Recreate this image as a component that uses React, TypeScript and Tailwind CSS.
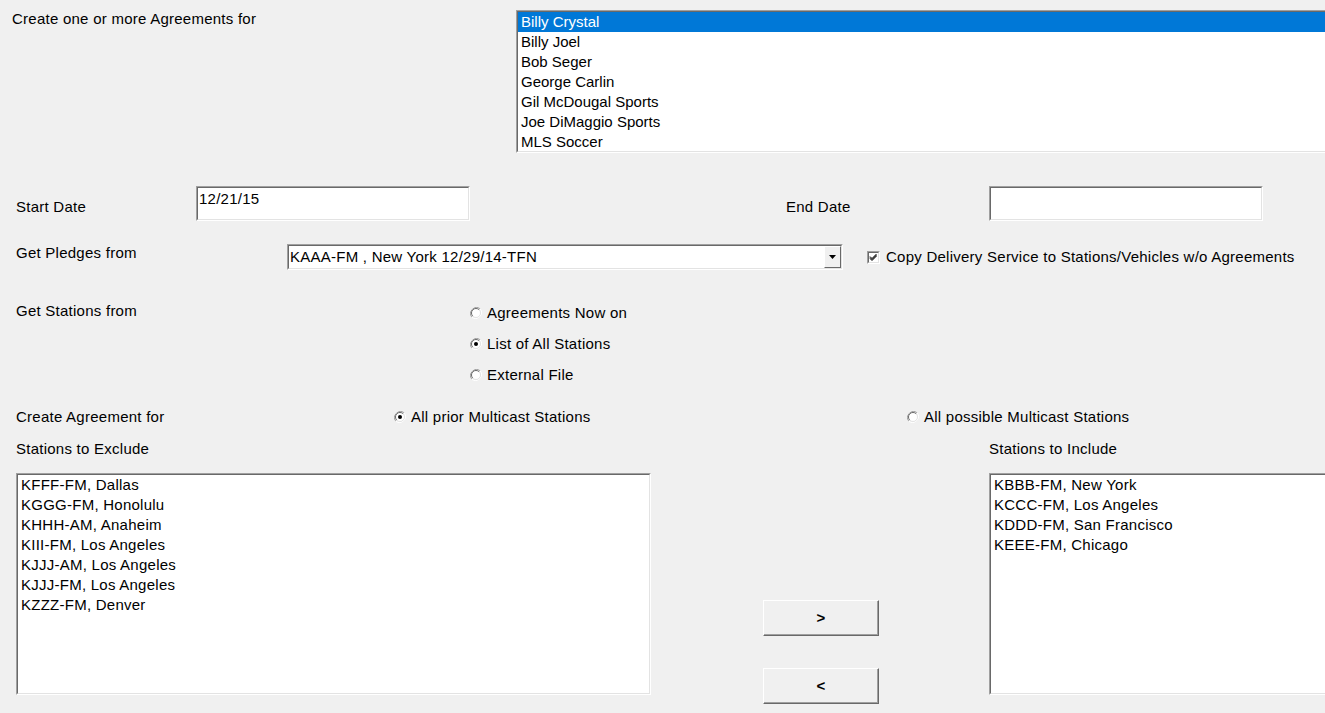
import React from 'react';

const font = "font-['Liberation_Sans',Arial,sans-serif]";

const agreements = [
  'Billy Crystal',
  'Billy Joel',
  'Bob Seger',
  'George Carlin',
  'Gil McDougal Sports',
  'Joe DiMaggio Sports',
  'MLS Soccer',
];

const excluded = [
  'KFFF-FM, Dallas',
  'KGGG-FM, Honolulu',
  'KHHH-AM, Anaheim',
  'KIII-FM, Los Angeles',
  'KJJJ-AM, Los Angeles',
  'KJJJ-FM, Los Angeles',
  'KZZZ-FM, Denver',
];

const included = [
  'KBBB-FM, New York',
  'KCCC-FM, Los Angeles',
  'KDDD-FM, San Francisco',
  'KEEE-FM, Chicago',
];

// classic sunken 3D frame
const Sunken = ({ className = '', children }: { className?: string; children?: React.ReactNode }) => (
  <div className={`border border-t-[#a0a0a0] border-l-[#a0a0a0] border-b-white border-r-white ${className}`}>
    <div className="w-full h-full border border-t-[#696969] border-l-[#696969] border-b-[#e3e3e3] border-r-[#e3e3e3] bg-white overflow-hidden">
      {children}
    </div>
  </div>
);

const Radio = ({ checked }: { checked?: boolean }) => (
  <svg width="12" height="12" viewBox="0 0 12 12" className="shrink-0">
    <path d="M10.2 1.8 A6 6 0 0 0 1.8 10.2" fill="none" stroke="#a0a0a0" strokeWidth="1" />
    <path d="M1.8 10.2 A6 6 0 0 0 10.2 1.8" fill="none" stroke="#ffffff" strokeWidth="1" />
    <circle cx="6" cy="6" r="4.5" fill="#fff" />
    <path d="M9.2 2.8 A4.5 4.5 0 0 0 2.8 9.2" fill="none" stroke="#696969" strokeWidth="1" />
    <path d="M2.8 9.2 A4.5 4.5 0 0 0 9.2 2.8" fill="none" stroke="#e3e3e3" strokeWidth="1" />
    {checked && <circle cx="6" cy="6" r="2" fill="#000" />}
  </svg>
);

const RadioOption = ({ label, checked }: { label: string; checked?: boolean }) => (
  <div className="flex items-center h-5">
    <Radio checked={checked} />
    <span className="ml-[5px] whitespace-nowrap">{label}</span>
  </div>
);

const Checkbox = () => (
  <Sunken className="w-[13px] h-[13px] shrink-0">
    <svg width="9" height="9" viewBox="0 0 9 9" className="block">
      <path d="M1 3.5 L3 5.5 L7.5 1 M1 4.5 L3 6.5 L7.5 2 M1 5.5 L3 7.5 L7.5 3" fill="none" stroke="#000" strokeWidth="1" />
    </svg>
  </Sunken>
);

const ArrowButton = ({ label }: { label: string }) => (
  <button className="w-[116px] h-[36px] bg-[#f0f0f0] border border-t-white border-l-white border-b-[#696969] border-r-[#696969] shadow-[inset_-1px_-1px_0_#a0a0a0] font-bold text-[15px] leading-5 flex items-center justify-center">
    {label}
  </button>
);

const ListBox = ({ items, className = '', selected }: { items: string[]; className?: string; selected?: number }) => (
  <Sunken className={className}>
    {items.map((item, i) => (
      <div
        key={item}
        className={`h-5 leading-5 pl-[3px] whitespace-nowrap ${i === selected ? 'bg-[#0078d7] text-white' : ''}`}
      >
        {item}
      </div>
    ))}
  </Sunken>
);

export default function App() {
  return (
    <div className={`${font} w-[1325px] h-[713px] overflow-hidden bg-[#f0f0f0] text-black text-[15px] leading-5 tracking-[0.25px]`}>
      {/* Agreements list */}
      <div className="flex pt-[9px]">
        <div className="w-[516px] pl-[12px] shrink-0">Create one or more Agreements for</div>
        <ListBox items={agreements} selected={0} className="mt-[1px] w-[830px] h-[143px] shrink-0 tracking-normal" />
      </div>

      {/* Dates */}
      <div className="flex mt-[33px]">
        <div className="w-[196px] pl-[16px] pt-[11px] shrink-0">Start Date</div>
        <Sunken className="w-[274px] h-[35px] shrink-0">
          <div className="pl-[1px] pt-[1px]">12/21/15</div>
        </Sunken>
        <div className="w-[316px] shrink-0" />
        <div className="w-[203px] pt-[11px] shrink-0">End Date</div>
        <Sunken className="w-[274px] h-[35px] shrink-0" />
      </div>

      {/* Pledges */}
      <div className="flex mt-[22px] items-start">
        <div className="w-[287px] pl-[16px] shrink-0">Get Pledges from</div>
        <Sunken className="mt-[1px] w-[556px] h-[26px] shrink-0">
          <div className="flex h-full">
            <div className="flex-1 pl-[1px] pt-px whitespace-nowrap">KAAA-FM , New York 12/29/14-TFN</div>
            <div className="w-[17px] h-full bg-[#f0f0f0] border border-t-white border-l-white border-b-[#696969] border-r-[#696969] flex items-center justify-center">
              <svg width="7" height="4" viewBox="0 0 7 4">
                <path d="M0 0 H7 L3.5 4 Z" fill="#000" />
              </svg>
            </div>
          </div>
        </Sunken>
        <div className="flex items-center ml-[24px] mt-[4px]">
          <Checkbox />
          <span className="ml-[6px] whitespace-nowrap">Copy Delivery Service to Stations/Vehicles w/o Agreements</span>
        </div>
      </div>

      {/* Stations source */}
      <div className="flex mt-[31px]">
        <div className="w-[470px] pl-[16px] shrink-0">Get Stations from</div>
        <div className="flex flex-col gap-[11px] mt-[2px]">
          <RadioOption label="Agreements Now on" />
          <RadioOption label="List of All Stations" checked />
          <RadioOption label="External File" />
        </div>
      </div>

      {/* Create agreement for */}
      <div className="flex mt-[22px]">
        <div className="w-[394px] pl-[16px] shrink-0">Create Agreement for</div>
        <div className="w-[513px] shrink-0">
          <RadioOption label="All prior Multicast Stations" checked />
        </div>
        <RadioOption label="All possible Multicast Stations" />
      </div>

      {/* Station lists */}
      <div className="flex mt-[12px]">
        <div className="w-[989px] pl-[16px] shrink-0">Stations to Exclude</div>
        <div>Stations to Include</div>
      </div>

      <div className="flex mt-[14px] pl-[16px]">
        <ListBox items={excluded} className="w-[635px] h-[222px] shrink-0" />
        <div className="w-[338px] shrink-0 flex flex-col items-start pl-[112px] pt-[127px] gap-[32px]">
          <ArrowButton label=">" />
          <ArrowButton label="<" />
        </div>
        <ListBox items={included} className="w-[345px] h-[222px] shrink-0" />
      </div>
    </div>
  );
}
